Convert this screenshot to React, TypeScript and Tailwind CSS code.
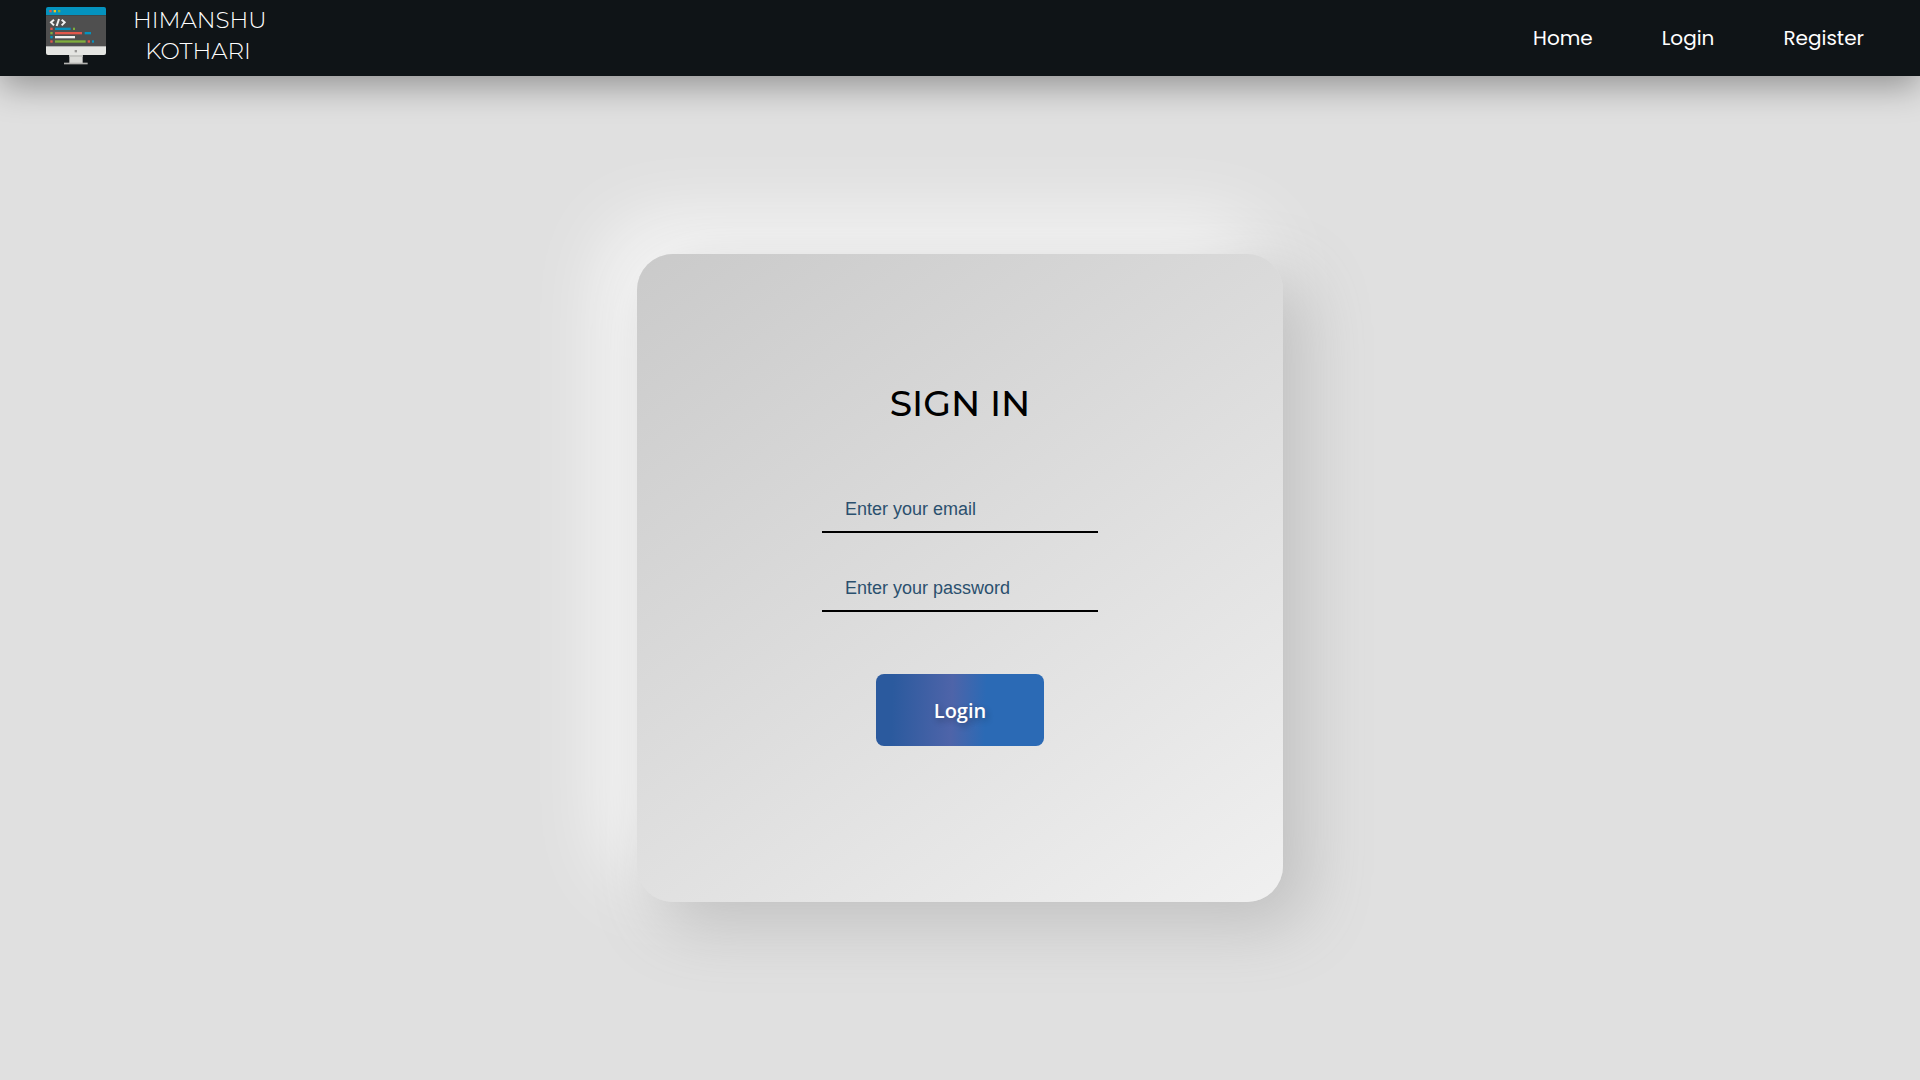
const links = ["Home", "Login", "Register"];

function MonitorLogo() {
  return (
    <svg viewBox="0 0 180 174" className="h-[58px] w-[60px]" aria-hidden="true">
      <path d="M6 0H174Q180 0 180 6V25H0V6Q0 0 6 0Z" fill="#0493bf" />
      <path d="M0 25H180V118H0Z" fill="#4f4f4f" />
      <path d="M0 118H180V138Q180 144 174 144H6Q0 144 0 138Z" fill="#e4e5e2" />
      <path d="M70 144H110V168H70Z" fill="#d9dad7" />
      <path d="M70 144H110V150H70Z" fill="#c3c4c1" />
      <path d="M54 167H125V172H54Z" fill="#b3b3b1" />
      <rect x="86" y="129" width="7" height="7" fill="#9a9a98" />
      <rect x="10" y="9" width="7" height="7" fill="#e2574c" />
      <rect x="23" y="9" width="7" height="7" fill="#efc41a" />
      <rect x="36" y="9" width="7" height="7" fill="#7fae3d" />
      <path d="M24 38L15 46L24 55M47 38L56 46L47 55M39 36L32 57" fill="none" stroke="#f0f0f0" strokeWidth="6" />
      <rect x="13" y="62" width="7" height="7" fill="#e2574c" />
      <rect x="27" y="62" width="47" height="7" fill="#0493bf" />
      <rect x="81" y="62" width="6" height="7" fill="#7fae3d" />
      <rect x="13" y="75" width="7" height="7" fill="#7fae3d" />
      <rect x="27" y="75" width="81" height="7" fill="#e2574c" />
      <rect x="116" y="75" width="19" height="7" fill="#0493bf" />
      <rect x="13" y="87" width="7" height="7" fill="#0493bf" />
      <rect x="27" y="87" width="60" height="7" fill="#f0f0f0" />
      <rect x="13" y="100" width="7" height="7" fill="#e2574c" />
      <rect x="27" y="100" width="92" height="7" fill="#7fae3d" />
      <rect x="125" y="100" width="7" height="7" fill="#e2574c" />
      <rect x="138" y="100" width="6" height="7" fill="#0493bf" />
    </svg>
  );
}

function Field({ type, label }: { type: string; label: string }) {
  return (
    <input
      type={type}
      aria-label={label}
      placeholder={label}
      className="block h-12 w-full border-b-2 border-black bg-transparent px-[23px] pt-0.5 font-['Liberation_Sans',Arial,sans-serif] text-lg text-[#2b506e] outline-none placeholder:text-[#2b506e] placeholder:opacity-100"
    />
  );
}

export default function App() {
  return (
    <div className="flex min-h-screen flex-col bg-[#e0e0e0]">
      <header className="relative z-10 flex h-[76px] items-center justify-between bg-[#0f1417] pr-14 pb-1 pl-[46px] text-white shadow-[0_10px_34px_rgba(0,0,0,0.35)]">
        <a href="#" className="flex items-center gap-[27px]">
          <MonitorLogo />
          <span className="w-[130px] text-center font-[Montserrat,sans-serif] text-[23px] leading-[31px] font-light">
            HIMANSHU KOTHARI
          </span>
        </a>
        <nav className="flex gap-[69px] pt-1 font-[Poppins,sans-serif] text-xl leading-8">
          {links.map((link) => (
            <a key={link} href="#">{link}</a>
          ))}
        </nav>
      </header>
      <main className="flex flex-1 items-center justify-center py-[156px]">
        <form
          onSubmit={(e) => e.preventDefault()}
          className="flex min-h-[648px] w-full max-w-[646px] flex-col items-center rounded-[36px] bg-[linear-gradient(145deg,#cacaca,#f0f0f0)] pt-[125px] shadow-[22px_22px_66px_#bebebe,-25px_-25px_82px_#ffffff]"
        >
          <h1 className="font-[Montserrat,sans-serif] text-[36px] leading-[48px] font-medium text-black">SIGN IN</h1>
          <div className="mt-[58px] flex w-[276px] flex-col gap-[31px]">
            <Field type="email" label="Enter your email" />
            <Field type="password" label="Enter your password" />
          </div>
          <button
            type="submit"
            className="mt-[62px] h-[72px] w-[168px] rounded-lg bg-[linear-gradient(92deg,#2b5a9e_10%,#4e64a9_45%,#2b6ab5_65%)] pt-0.5 font-['Open_Sans',sans-serif] text-xl font-semibold text-white [text-shadow:2px_3px_6px_rgba(0,0,0,0.3)]"
          >
            Login
          </button>
        </form>
      </main>
    </div>
  );
}
